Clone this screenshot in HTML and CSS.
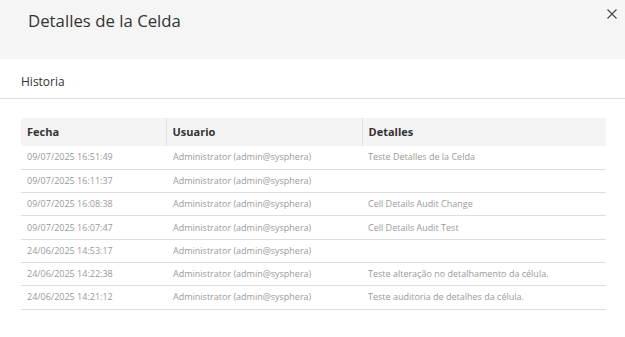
FILE: index.html
```html
<!DOCTYPE html>
<html lang="es">
<head>
<meta charset="utf-8">
<link rel="stylesheet" href="styles.css">
</head>
<body>
<div class="modal">
  <header class="modal-head">
    <h1 class="modal-title">Detalles de la Celda</h1>
    <button class="close" aria-label="Cerrar">
      <svg width="10" height="10" viewBox="0 0 10 10"><path d="M0.5 0.5L9.5 9.5M9.5 0.5L0.5 9.5" stroke="#444" stroke-width="1.1" fill="none"/></svg>
    </button>
  </header>
  <div class="tabs"><span class="tab">Historia</span></div>
  <div class="content">
    <table class="grid">
      <thead>
        <tr><th class="c1">Fecha</th><th class="c2">Usuario</th><th class="c3">Detalles</th></tr>
      </thead>
      <tbody>
        <tr><td>09/07/2025 16:51:49</td><td>Administrator (admin@sysphera)</td><td>Teste Detalles de la Celda</td></tr>
        <tr><td>09/07/2025 16:11:37</td><td>Administrator (admin@sysphera)</td><td></td></tr>
        <tr><td>09/07/2025 16:08:38</td><td>Administrator (admin@sysphera)</td><td>Cell Details Audit Change</td></tr>
        <tr><td>09/07/2025 16:07:47</td><td>Administrator (admin@sysphera)</td><td>Cell Details Audit Test</td></tr>
        <tr><td>24/06/2025 14:53:17</td><td>Administrator (admin@sysphera)</td><td></td></tr>
        <tr><td>24/06/2025 14:22:38</td><td>Administrator (admin@sysphera)</td><td>Teste alteração no detalhamento da célula.</td></tr>
        <tr><td>24/06/2025 14:21:12</td><td>Administrator (admin@sysphera)</td><td>Teste auditoria de detalhes da célula.</td></tr>
      </tbody>
    </table>
  </div>
</div>
</body>
</html>
```
FILE: styles.css
```css
* { box-sizing: border-box; }
html, body { margin: 0; padding: 0; background: #fff; }
body { font-family: "Open Sans", "Liberation Sans", sans-serif; color: #333; width: 625px; height: 337px; overflow: hidden; }

.modal-head {
  height: 59px;
  background: #f5f5f5;
  display: flex;
  justify-content: space-between;
  align-items: flex-start;
  padding: 0 8px 0 28px;
}
.modal-title {
  margin: 9px 0 0;
  font-size: 16.8px;
  font-weight: 400;
  color: #333;
  line-height: 24px;
}
.close {
  border: 0;
  background: transparent;
  padding: 0;
  margin-top: 9px;
  width: 10px;
  height: 10px;
  display: flex;
}

.tabs {
  height: 40px;
  border-bottom: 1px solid #dcdcdc;
  padding: 10px 0 0 21px;
}
.tab { font-size: 12px; line-height: 17px; color: #333; }

.content { padding: 19px 19px 0 21px; }
.grid { width: 585px; border-collapse: collapse; table-layout: fixed; }
.grid th {
  background: #f4f4f4;
  height: 28px;
  text-align: left;
  font-size: 11px;
  font-weight: 700;
  color: #333;
  padding: 0 6px 1px;
  border-left: 1px solid #e2e2e2;
}
.grid th.c1 { width: 145px; border-left: 0; }
.grid th.c2 { width: 196px; }
.grid td {
  height: 23.3px;
  font-size: 9px;
  color: #9a9a9a;
  padding: 0 6px 1px;
  border-bottom: 1px solid #dedede;
  white-space: nowrap;
}
.grid td:nth-child(2) { padding-left: 7px; }
```
